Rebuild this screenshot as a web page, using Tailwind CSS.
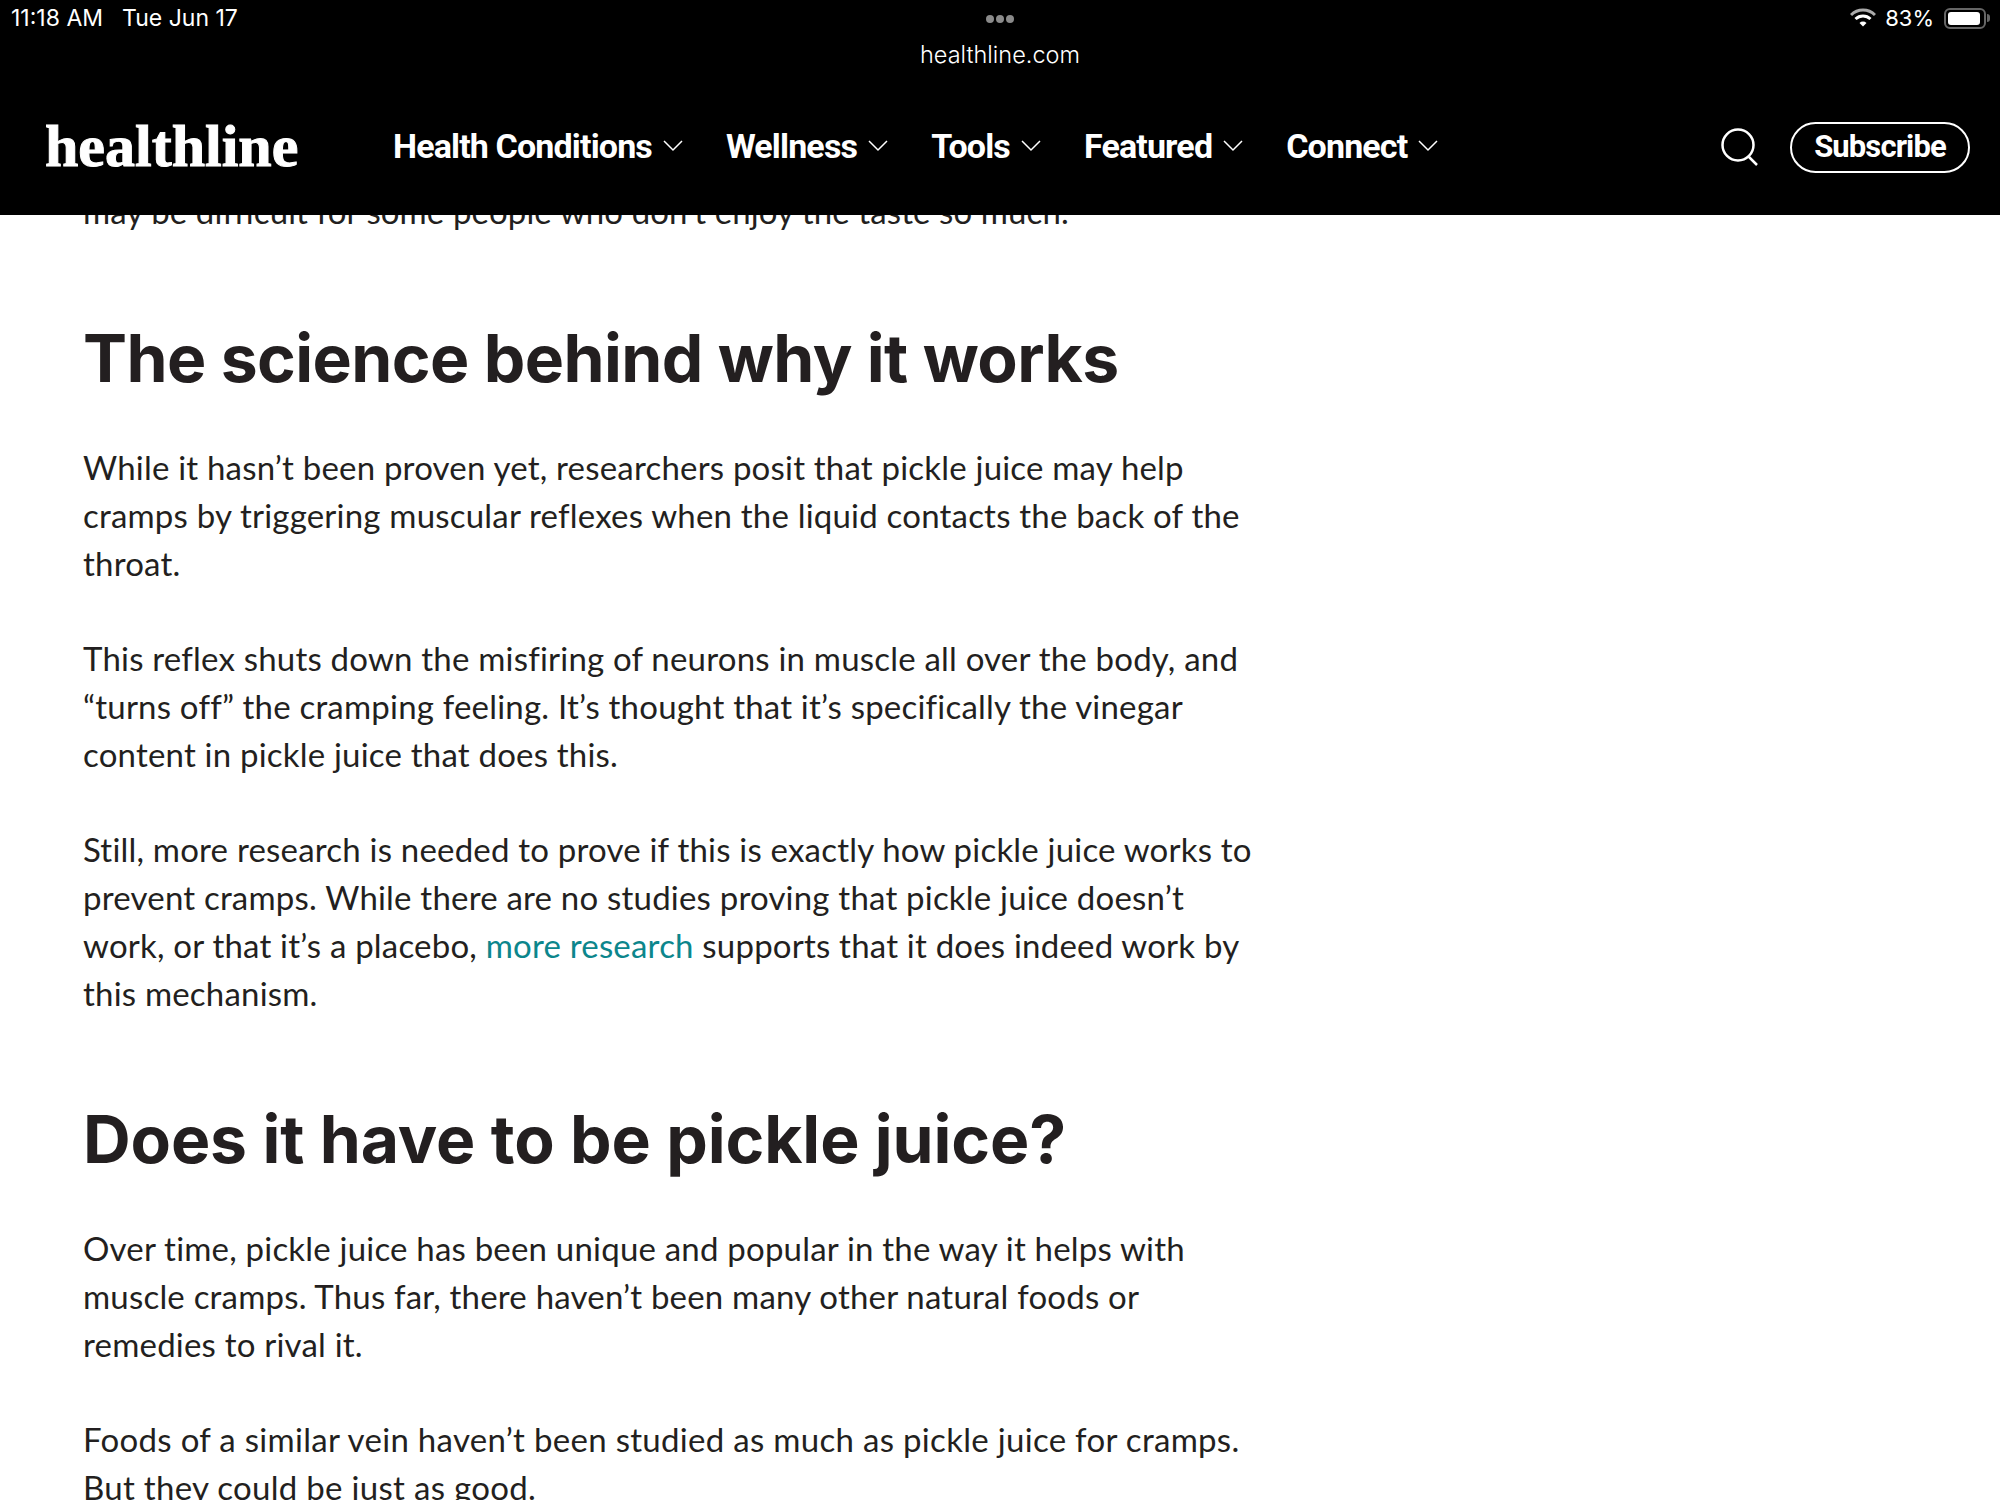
<!DOCTYPE html>
<html lang="en">
<head>
    <meta charset="UTF-8">
    <title>healthline</title>
    <script src="https://cdn.jsdelivr.net/npm/@tailwindcss/browser@4"></script>
</head>
<body class="bg-white overflow-hidden h-[1500px] font-['Lato',sans-serif] text-[#231f20]">
    <header class="bg-black h-[215px] flex flex-col text-white relative z-10">
        <!-- ipad status bar -->
        <div class="h-[36px] flex items-center justify-between pl-[11px] pr-[10px] text-[23px] font-['Inter',sans-serif]">
            <div class="flex gap-[19px]"><span>11:18 AM</span><span>Tue Jun 17</span></div>
            <div class="flex items-center gap-[9px]">
                <svg width="26" height="20" viewBox="0 0 26 20"><path d="M1 7a17 17 0 0 1 24 0" fill="none" stroke="#aaa" stroke-width="3"/><path d="M5.500 11a11 11 0 0 1 15 0" fill="none" stroke="#fff" stroke-width="3"/><path d="M9.500 15a5 5 0 0 1 7 0L13 18.500z" fill="#fff"/></svg>
                <span class="text-[22px]">83%</span>
                <div class="flex items-center gap-[1px] ml-[1px]">
                    <div class="w-[42px] h-[21px] rounded-[6px] border-2 border-[#666] p-[2px]"><div class="w-[32px] h-full bg-white rounded-[3px]"></div></div>
                    <div class="w-[3px] h-[8px] bg-[#666] rounded-r"></div>
                </div>
            </div>
        </div>
        <div class="flex flex-col items-center -mt-[21px]">
            <div class="flex gap-[2px]">
                <span class="w-[8px] h-[8px] rounded-full bg-[#8a8a8a]"></span>
                <span class="w-[8px] h-[8px] rounded-full bg-[#8a8a8a]"></span>
                <span class="w-[8px] h-[8px] rounded-full bg-[#8a8a8a]"></span>
            </div>
            <div class="text-[23.500px] leading-[30px] mt-[17px] font-['Inter',sans-serif] font-light">healthline.com</div>
        </div>
        <nav class="flex items-center h-[60px] mt-[46px] pl-[45px] pr-[30px]">
            <div class="w-[348px] font-['Liberation_Serif',serif] font-bold text-[60px] leading-none [-webkit-text-stroke:1px_white]">healthline</div>
            <div class="flex items-center gap-[43px] text-[34px] font-bold font-['Roboto',sans-serif] tracking-[-0.85px]">
                <div class="flex items-center gap-[11px]">Health Conditions<svg width="20" height="12" viewBox="0 0 20 12"><path d="M1 1l9 9 9-9" fill="none" stroke="#fff" stroke-width="1.500"/></svg></div>
                <div class="flex items-center gap-[11px]">Wellness<svg width="20" height="12" viewBox="0 0 20 12"><path d="M1 1l9 9 9-9" fill="none" stroke="#fff" stroke-width="1.500"/></svg></div>
                <div class="flex items-center gap-[11px]">Tools<svg width="20" height="12" viewBox="0 0 20 12"><path d="M1 1l9 9 9-9" fill="none" stroke="#fff" stroke-width="1.500"/></svg></div>
                <div class="flex items-center gap-[11px]">Featured<svg width="20" height="12" viewBox="0 0 20 12"><path d="M1 1l9 9 9-9" fill="none" stroke="#fff" stroke-width="1.500"/></svg></div>
                <div class="flex items-center gap-[11px]">Connect<svg width="20" height="12" viewBox="0 0 20 12"><path d="M1 1l9 9 9-9" fill="none" stroke="#fff" stroke-width="1.500"/></svg></div>
            </div>
            <div class="ml-auto flex items-center gap-[31px] translate-y-[1px]">
                <svg width="38" height="38" viewBox="0 0 38 38"><circle cx="17" cy="17" r="15.500" fill="none" stroke="#fff" stroke-width="2.500"/><path d="M27 28l9 9" stroke="#fff" stroke-width="2.500"/></svg>
                <div class="w-[180px] h-[51px] rounded-full border-2 border-white flex items-center justify-center text-[31px] font-bold font-['Roboto',sans-serif] tracking-[-0.9px]">Subscribe</div>
            </div>
        </nav>
    </header>

    <main class="w-[1265px] pl-[83px] h-[1285px] overflow-hidden text-[33px] leading-[48px] tracking-[0.2px]">
        <p class="-mt-[28px] tracking-[0.1px]">may be difficult for some people who don’t enjoy the taste so much.</p>
        <h2 class="text-[66px] leading-[80px] font-bold font-['Inter',sans-serif] tracking-[-0.6px] mt-[83px] mb-[45px]">The science behind why it works</h2>
        <p class="mb-[47px]">While it hasn’t been proven yet, researchers posit that pickle juice may help cramps by triggering muscular reflexes when the liquid contacts the back of the throat.</p>
        <p class="mb-[47px]">This reflex shuts down the misfiring of neurons in muscle all over the body, and “turns off” the cramping feeling. It’s thought that it’s specifically the vinegar content in pickle juice that does this.</p>
        <p>Still, more research is needed to prove if this is exactly how pickle juice works to prevent cramps. While there are no studies proving that pickle juice doesn’t work, or that it’s a placebo, <a class="text-[#0c868c]">more research</a> supports that it does indeed work by this mechanism.</p>
        <h2 class="text-[66px] leading-[80px] font-bold font-['Inter',sans-serif] tracking-[-0.12px] mt-[82px] mb-[45px]">Does it have to be pickle juice?</h2>
        <p class="mb-[47px]">Over time, pickle juice has been unique and popular in the way it helps with muscle cramps. Thus far, there haven’t been many other natural foods or remedies to rival it.</p>
        <p class="tracking-[0.3px]">Foods of a similar vein haven’t been studied as much as pickle juice for cramps. But they could be just as good.</p>
    </main>
</body>
</html>
